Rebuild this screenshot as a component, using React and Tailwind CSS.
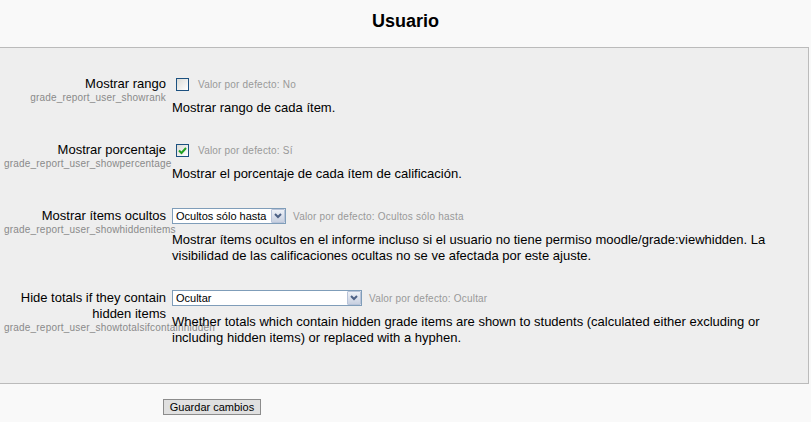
import React from 'react'

const SETTINGS = [
  {
    id: 'showrank',
    label: ['Mostrar rango'],
    name: 'grade_report_user_showrank',
    control: { type: 'checkbox', checked: false },
    def: 'Valor por defecto: No',
    desc: ['Mostrar rango de cada ítem.'],
  },
  {
    id: 'showpercentage',
    label: ['Mostrar porcentaje'],
    name: 'grade_report_user_showpercentage',
    control: { type: 'checkbox', checked: true },
    def: 'Valor por defecto: Sí',
    desc: ['Mostrar el porcentaje de cada ítem de calificación.'],
  },
  {
    id: 'showhiddenitems',
    label: ['Mostrar ítems ocultos'],
    name: 'grade_report_user_showhiddenitems',
    control: { type: 'select', value: 'Ocultos sólo hasta', width: 'w-[114px]' },
    def: 'Valor por defecto: Ocultos sólo hasta',
    desc: [
      'Mostrar ítems ocultos en el informe incluso si el usuario no tiene permiso moodle/grade:viewhidden. La visibilidad de las calificaciones ocultas no se ve afectada por este ajuste.',
    ],
  },
  {
    id: 'showtotalsifcontainhidden',
    label: ['Hide totals if they contain hidden items'],
    name: 'grade_report_user_showtotalsifcontainhidden',
    control: { type: 'select', value: 'Ocultar', width: 'w-[190px]' },
    def: 'Valor por defecto: Ocultar',
    desc: [
      'Whether totals which contain hidden grade items are shown to students (calculated either excluding or including hidden items) or replaced with a hyphen.',
    ],
  },
]

function XpCheckbox({ checked }) {
  return (
    <div className="ml-[4px] w-[13px] h-[13px] border border-[#1c5180] bg-gradient-to-br from-[#dcdcd7] to-white flex items-center justify-center shrink-0">
      {checked && (
        <svg width="9" height="9" viewBox="0 0 9 9">
          <path d="M1 4.5 L3.5 7 L8 2" stroke="#21a121" strokeWidth="2" fill="none" />
        </svg>
      )}
    </div>
  )
}

function XpSelect({ value, width }) {
  return (
    <div className={`${width} h-[16px] border border-[#7f9db9] bg-white flex items-stretch shrink-0`}>
      <span className="flex-1 pl-[3px] text-[11px] leading-[14px] text-black whitespace-nowrap overflow-hidden">
        {value}
      </span>
      <div className="w-[14px] bg-gradient-to-b from-[#eef1f7] to-[#c8d0e0] border border-[#b9c4d9] rounded-[1px] flex items-center justify-center">
        <svg width="8" height="6" viewBox="0 0 8 6">
          <path d="M1 1 L4 4 L7 1" stroke="#4d6185" strokeWidth="2" fill="none" />
        </svg>
      </div>
    </div>
  )
}

function SettingRow({ s }) {
  return (
    <div className="flex">
      {/* Label + internal name */}
      <div className="w-[162px] shrink-0 text-right">
        {s.label.map((l) => (
          <div key={l} className="text-[13px] leading-[16px] text-black">{l}</div>
        ))}
        <div className="text-[10px] leading-[12px] tracking-[0.2px] text-[#8a8a8a] whitespace-nowrap">{s.name}</div>
      </div>

      {/* Control, default and description */}
      <div className="flex-1 ml-[6px]">
        <div className="h-[16px] flex items-center">
          {s.control.type === 'checkbox' ? (
            <XpCheckbox checked={s.control.checked} />
          ) : (
            <XpSelect value={s.control.value} width={s.control.width} />
          )}
          <span
            className={
              s.control.type === 'checkbox'
                ? 'ml-[9px] mt-[2px] text-[10px] leading-[12px] tracking-[0.2px] text-[#999]'
                : 'ml-[7px] mt-[2px] text-[10px] leading-[12px] tracking-[0.2px] text-[#999]'
            }
          >
            {s.def}
          </span>
        </div>
        <div className="mt-[8px] text-[13px] leading-[16px] text-black">
          {s.desc.map((d) => (
            <p key={d}>{d}</p>
          ))}
        </div>
      </div>
    </div>
  )
}

export default function App() {
  return (
    <div className="w-[811px] h-[422px] bg-[#f9f9f9] font-['Liberation_Sans',Arial,sans-serif] overflow-hidden">
      {/* Header */}
      <div className="h-[47px] pt-[12px] text-center">
        <h2 className="text-[18px] leading-[18px] font-bold text-black">Usuario</h2>
      </div>

      {/* Settings panel */}
      <div className="mr-[2px] bg-[#eeeeee] border-t border-r border-b border-[#bbbbbb] pt-[28px] pb-[37px] pl-[4px] pr-[10px]">
        <div className="flex flex-col gap-[26px]">
          {SETTINGS.map((s) => (
            <SettingRow key={s.id} s={s} />
          ))}
        </div>
      </div>

      {/* Save */}
      <div className="pt-[10px] pl-[163px]">
        <button className="w-[98px] h-[16px] bg-[#e0e0e0] border border-[#8c8c8c] text-[11px] leading-[14px] text-black">
          Guardar cambios
        </button>
      </div>
    </div>
  )
}
